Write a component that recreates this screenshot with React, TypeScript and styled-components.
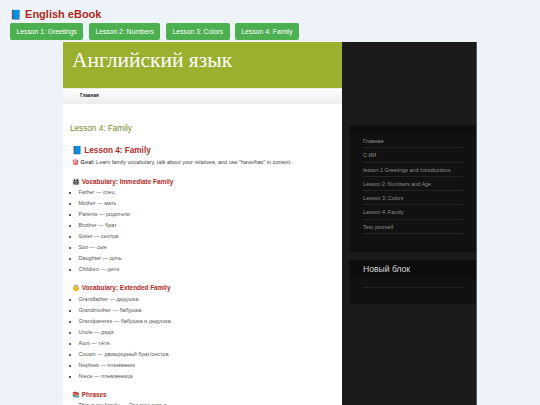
import React from 'react';
import styled, { createGlobalStyle } from 'styled-components';

const sans = '"Liberation Sans", Arial, sans-serif';

const Global = createGlobalStyle`
  html, body {
    margin: 0;
    height: 405px;
    overflow: hidden;
    background: #eef2f9;
    font-family: ${sans};
  }
`;

const Page = styled.div`
  padding: 7px 10px 0;
`;

const Title = styled.h1`
  margin: 0 0 1px;
  height: 15px;
  font-size: 11px;
  line-height: 15px;
  font-weight: 700;
  color: #b02a1c;
`;

const TitleIcon = styled.span`
  font-size: 9.5px;
`;

const Tabs = styled.div`
  display: flex;
  gap: 5.5px;
  margin-bottom: 2px;
`;

const Tab = styled.button`
  height: 17px;
  padding: 0 6.5px;
  border: 0;
  border-radius: 2px;
  background: #4caf50;
  color: #fff;
  font-family: ${sans};
  font-size: 6.75px;
  line-height: 17px;
`;

const Frame = styled.div`
  display: grid;
  grid-template-columns: 279px 135px;
  width: 414px;
  height: 363px;
  margin-left: 53px;
  overflow: hidden;
`;

const Main = styled.main`
  background: #fff;
  min-width: 0;
`;

const Banner = styled.header`
  height: 46px;
  box-sizing: border-box;
  padding: 6px 9px 0;
  background: #9bb02f;
  color: #fff;
  font-family: "Liberation Serif", serif;
  font-size: 21.5px;
  line-height: 25px;
`;

const NavBar = styled.nav`
  height: 16px;
  padding-left: 17px;
  border-top: 1px solid #e9ebdf;
  box-sizing: border-box;
  background: linear-gradient(#fdfdfd, #ececec);
  font-size: 4.6px;
  font-weight: 700;
  line-height: 13px;
  color: #222;
`;

const Content = styled.div`
  padding: 19px 7px 0;
`;

const PageTitle = styled.h2`
  margin: 0 0 10.5px;
  font-size: 8.2px;
  line-height: 11px;
  font-weight: 400;
  color: #6f8a2a;
`;

const Article = styled.article`
  padding-left: 2px;
`;

const LessonTitle = styled.h3`
  margin: 0 0 1.5px;
  font-size: 8.2px;
  line-height: 12px;
  font-weight: 700;
  color: #b02a1c;
`;

const Goal = styled.p`
  margin: 0 0 9.5px;
  font-size: 5.5px;
  line-height: 9px;
  color: #444;
`;

const SectionTitle = styled.h4`
  margin: 0 0 0.5px;
  font-size: 6.4px;
  line-height: 10px;
  font-weight: 700;
  color: #b02a1c;
`;

const Vocab = styled.ul`
  margin: 0 0 8px;
  padding: 0 0 0 6.5px;
  list-style-position: outside;
`;

const Word = styled.li`
  height: 11px;
  font-size: 5.5px;
  line-height: 11px;
  color: #555;

  &::marker {
    font-size: 5px;
    color: #333;
  }
`;

const Side = styled.aside`
  box-sizing: border-box;
  padding: 84px 0 0 8px;
  background: #1a1a1a;
  border-right: 1px solid #5c5c5c;
`;

const MenuBlock = styled.section`
  height: 126px;
  box-sizing: border-box;
  margin-bottom: 8px;
  padding: 0 13px;
  border-top: 8px solid #0d0d0d;
  background: #111;
`;

const Menu = styled.ul`
  margin: 0;
  padding: 0;
  list-style: none;
`;

const MenuItem = styled.li`
  height: 14.3px;
  box-sizing: border-box;
  border-bottom: 1px solid #242424;
  font-size: 5.4px;
  line-height: 15px;
  color: #8e8e8e;
`;

const NewBlock = styled.section`
  height: 44px;
  padding: 0 13px;
  background: linear-gradient(#0c0c0c 19px, #111 19px);
`;

const BlockTitle = styled.h5`
  margin: 0;
  height: 27px;
  border-bottom: 1px solid #222;
  font-size: 8.6px;
  line-height: 19px;
  font-weight: 400;
  color: #d6d6d6;
`;

const tabs = ['Lesson 1: Greetings', 'Lesson 2: Numbers', 'Lesson 3: Colors', 'Lesson 4: Family'];

const immediate = [
  'Father — отец',
  'Mother — мать',
  'Parents — родители',
  'Brother — брат',
  'Sister — сестра',
  'Son — сын',
  'Daughter — дочь',
  'Children — дети',
];

const extended = [
  'Grandfather — дедушка',
  'Grandmother — бабушка',
  'Grandparents — бабушка и дедушка',
  'Uncle — дядя',
  'Aunt — тётя',
  'Cousin — двоюродный брат/сестра',
  'Nephew — племянник',
  'Niece — племянница',
];

const menu = [
  'Главная',
  'С ИИ',
  'lesson 1 Greetings and Introductions',
  'Lesson 2: Numbers and Age',
  'Lesson 3: Colors',
  'Lesson 4: Family',
  'Test yourself',
];

export default function App() {
  return (
    <Page>
      <Global />
      <Title>
        <TitleIcon>📘</TitleIcon> English eBook
      </Title>
      <Tabs>
        {tabs.map((e) => (
          <Tab key={e}>{e}</Tab>
        ))}
      </Tabs>
      <Frame>
        <Main>
          <Banner>Английский язык</Banner>
          <NavBar>Главная</NavBar>
          <Content>
            <PageTitle>Lesson 4: Family</PageTitle>
            <Article>
              <LessonTitle>📘 Lesson 4: Family</LessonTitle>
              <Goal>
                🎯 <b>Goal:</b> Learn family vocabulary, talk about your relatives, and use "have/has" in context.
              </Goal>
              <SectionTitle>👨‍👩‍👧‍👦 Vocabulary: Immediate Family</SectionTitle>
              <Vocab>
                {immediate.map((e) => (
                  <Word key={e}>{e}</Word>
                ))}
              </Vocab>
              <SectionTitle>👵 Vocabulary: Extended Family</SectionTitle>
              <Vocab>
                {extended.map((e) => (
                  <Word key={e}>{e}</Word>
                ))}
              </Vocab>
              <SectionTitle>📚 Phrases</SectionTitle>
              <Vocab>
                <Word>This is my family. — Это моя семья.</Word>
              </Vocab>
            </Article>
          </Content>
        </Main>
        <Side>
          <MenuBlock>
            <Menu>
              {menu.map((e) => (
                <MenuItem key={e}>{e}</MenuItem>
              ))}
            </Menu>
          </MenuBlock>
          <NewBlock>
            <BlockTitle>Новый блок</BlockTitle>
          </NewBlock>
        </Side>
      </Frame>
    </Page>
  );
}
